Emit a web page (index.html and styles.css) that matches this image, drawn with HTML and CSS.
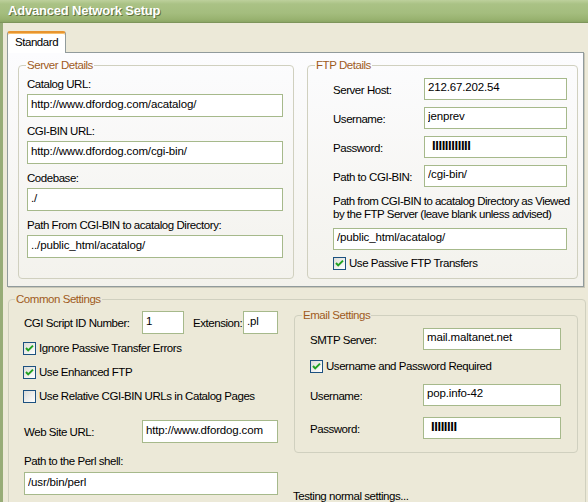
FILE: index.html
```html
<!DOCTYPE html>
<html>

<head>
  <title>Advanced Network Setup</title>
  <link rel="stylesheet" href="styles.css">
</head>

<body>
  <div class="titlebar">Advanced Network Setup</div>

  <div class="window">
    <!-- Tabs -->
    <div class="tabs">
      <span class="tab">Standard</span>
    </div>

    <div class="tab-panel">
      <fieldset class="group server">
        <legend>Server Details</legend>
        <label class="field-label">Catalog URL:</label>
        <input class="text-input" type="text" value="http://www.dfordog.com/acatalog/">
        <label class="field-label">CGI-BIN URL:</label>
        <input class="text-input" type="text" value="http://www.dfordog.com/cgi-bin/">
        <label class="field-label">Codebase:</label>
        <input class="text-input" type="text" value="./">
        <label class="field-label">Path From CGI-BIN to acatalog Directory:</label>
        <input class="text-input last" type="text" value="../public_html/acatalog/">
      </fieldset>

      <fieldset class="group ftp">
        <legend>FTP Details</legend>
        <div class="ftp-grid">
          <label class="row-label">Server Host:</label>
          <input class="text-input short" type="text" value="212.67.202.54">
          <label class="row-label">Username:</label>
          <input class="text-input short" type="text" value="jenprev">
          <label class="row-label">Password:</label>
          <input class="text-input short secret" type="text" value="IIIIIIIIIIII">
          <label class="row-label">Path to CGI-BIN:</label>
          <input class="text-input short" type="text" value="/cgi-bin/">
          <label class="wide-label">Path from CGI-BIN to acatalog Directory as Viewed by the FTP Server (leave blank unless advised)</label>
          <input class="text-input short wide-input" type="text" value="/public_html/acatalog/">
          <div class="check wide-check">
            <span class="box"><svg width="11" height="11" viewBox="0 0 11 11"><path d="M2 5 L4.2 7.4 L9 2.6" fill="none" stroke="#21a121" stroke-width="2"/></svg></span>
            <span>Use Passive FTP Transfers</span>
          </div>
        </div>
      </fieldset>
    </div>

    <!-- Common settings -->
    <fieldset class="group common">
      <legend>Common Settings</legend>
      <div class="common-body">
        <div class="common-left">
          <div class="inline-row">
            <label class="script-label">CGI Script ID Number:</label>
            <input class="text-input id-input" type="text" value="1">
            <label class="ext-label">Extension:</label>
            <input class="text-input ext-input" type="text" value=".pl">
          </div>
          <div class="check first-check">
            <span class="box"><svg width="11" height="11" viewBox="0 0 11 11"><path d="M2 5 L4.2 7.4 L9 2.6" fill="none" stroke="#21a121" stroke-width="2"/></svg></span>
            <span>Ignore Passive Transfer Errors</span>
          </div>
          <div class="check">
            <span class="box"><svg width="11" height="11" viewBox="0 0 11 11"><path d="M2 5 L4.2 7.4 L9 2.6" fill="none" stroke="#21a121" stroke-width="2"/></svg></span>
            <span>Use Enhanced FTP</span>
          </div>
          <div class="check">
            <span class="box"></span>
            <span>Use Relative CGI-BIN URLs in Catalog Pages</span>
          </div>
          <div class="inline-row web-row">
            <label class="script-label">Web Site URL:</label>
            <input class="text-input web-input" type="text" value="http://www.dfordog.com">
          </div>
          <label class="field-label perl-label">Path to the Perl shell:</label>
          <input class="text-input perl-input" type="text" value="/usr/bin/perl">
        </div>

        <div class="common-right">
          <fieldset class="group email">
            <legend>Email Settings</legend>
            <div class="email-body">
              <div class="email-row">
                <label class="row-label">SMTP Server:</label>
                <input class="text-input short" type="text" value="mail.maltanet.net">
              </div>
              <div class="check email-check">
                <span class="box"><svg width="11" height="11" viewBox="0 0 11 11"><path d="M2 5 L4.2 7.4 L9 2.6" fill="none" stroke="#21a121" stroke-width="2"/></svg></span>
                <span>Username and Password Required</span>
              </div>
              <div class="email-row spaced">
                <label class="row-label">Username:</label>
                <input class="text-input short" type="text" value="pop.info-42">
              </div>
              <div class="email-row spaced">
                <label class="row-label">Password:</label>
                <input class="text-input short secret" type="text" value="IIIIIIII">
              </div>
            </div>
          </fieldset>
          <div class="status">Testing normal settings...</div>
        </div>
      </div>
    </fieldset>
  </div>
</body>

</html>
```

FILE: styles.css
```css
body {
  margin: 0;
  width: 588px;
  height: 502px;
  overflow: hidden;
  background-color: #ece9d8;
  font-family: "Liberation Sans", Arial, sans-serif;
  font-size: 11.5px;
  letter-spacing: -0.45px;
  color: #000;
}

.titlebar {
  height: 22px;
  line-height: 22px;
  padding-left: 8px;
  background: linear-gradient(#bdd09c 0%, #aac285 18%, #a4bd7e 60%, #98b26f 88%, #8ba565 100%);
  border-bottom: 1px solid #7d955a;
  color: #fff;
  font-size: 13px;
  font-weight: bold;
  letter-spacing: -0.2px;
  text-shadow: 1px 1px 0 #5f7240;
}

.window {
  border-left: 3px solid #97ac77;
  padding: 8px 0 0 4px;
  height: 480px;
}

/* tabs */
.tabs {
  display: flex;
  align-items: flex-end;
}

.tab {
  position: relative;
  z-index: 1;
  margin-bottom: -1px;
  background-color: #fff;
  border: 1px solid #919b9c;
  border-top: 2px solid #e8952f;
  border-bottom: none;
  border-radius: 3px 3px 0 0;
  box-shadow: inset 0 1px 0 #f7c06e;
  padding: 2px 7px 4px;
  line-height: 14px;
}

.tab-panel {
  display: flex;
  gap: 13px;
  width: 577px;
  box-sizing: border-box;
  padding: 5px 5px 7px 10px;
  border: 1px solid #919b9c;
  background: linear-gradient(#fcfcfe, #f3f2ec);
  box-shadow: 1px 1px 0 #c9c7b7;
}

/* group boxes */
.group {
  margin: 0;
  min-width: 0;
  border: 1px solid #d0d0bf;
  border-radius: 4px;
}

.group legend {
  padding: 0 1px;
  margin-left: -1px;
  line-height: 14px;
  color: #9f5b1d;
}

.server {
  width: 276px;
  box-sizing: border-box;
  flex: none;
  padding: 5px 10px 16px 8px;
}

.ftp {
  flex: 1;
  padding: 6px 10px 8px 8px;
}

.field-label {
  display: block;
  line-height: 14px;
}

.text-input {
  display: block;
  box-sizing: border-box;
  width: 100%;
  height: 23px;
  margin: 3px 0 7px;
  padding: 0 3px 4px;
  border: 1px solid #a6b98b;
  background-color: #fff;
  font: inherit;
  letter-spacing: -0.15px;
  color: #000;
  outline: none;
}

.text-input.last {
  margin-bottom: 0;
}

.text-input.short {
  height: 22px;
  margin: 0;
}

.text-input.secret {
  padding-left: 7px;
  font-size: 13px;
  font-weight: bold;
  letter-spacing: -0.4px;
}

.ftp-grid {
  display: grid;
  grid-template-columns: 91px 1fr;
  row-gap: 7px;
  margin-left: 17px;
}

.row-label {
  align-self: center;
  padding-top: 1px;
  line-height: 14px;
}

.wide-label {
  grid-column: 1 / -1;
  margin: 1px -10px 0 0;
  line-height: 13px;
  letter-spacing: -0.5px;
}

.wide-input {
  grid-column: 1 / -1;
  margin-top: -3px;
}

.wide-check {
  grid-column: 1 / -1;
  margin-top: -1px;
}

/* checkboxes */
.check {
  display: flex;
  align-items: center;
  gap: 3px;
  height: 14px;
  line-height: 14px;
}

.box {
  display: flex;
  align-items: center;
  justify-content: center;
  width: 13px;
  height: 13px;
  box-sizing: border-box;
  border: 1px solid #1c5180;
  background: linear-gradient(135deg, #dcdcd7, #fff);
}

/* common settings */
.common {
  width: 578px;
  height: 260px;
  box-sizing: border-box;
  margin: 5px 0 0 1px;
  padding: 2px 7px 0 7px;
}

.common-body {
  display: flex;
  gap: 16px;
}

.common-left {
  width: 262px;
  box-sizing: border-box;
  padding: 3px 0 0 6px;
}

.inline-row {
  display: flex;
  align-items: center;
}

.inline-row .text-input {
  margin: 0;
}

.script-label {
  width: 118px;
  flex: none;
  margin-left: 2px;
}

.id-input {
  width: 42px;
}

.ext-label {
  width: 50px;
  flex: none;
  margin-left: 9px;
}

.ext-input {
  width: 35px;
}

.common-left .check {
  margin-top: 10px;
  padding-left: 1px;
}

.common-left .first-check {
  margin-top: 7px;
}

.web-row {
  margin-top: 17px;
}

.web-input {
  width: 136px;
}

.perl-label {
  margin: 11px 0 0 2px;
}

.perl-input {
  width: 254px;
  margin: 4px 0 0 2px;
}

.common-right {
  width: 284px;
  display: flex;
  flex-direction: column;
}

.email {
  padding: 6px 16px 13px 8px;
}

.email-body {
  margin-left: 7px;
}

.email-row {
  display: grid;
  grid-template-columns: 113px 1fr;
}

.email-row.spaced {
  margin-top: 11px;
}

.email-check {
  margin-top: 9px;
}

.status {
  margin: 36px 0 0 -1px;
  line-height: 14px;
}
```
